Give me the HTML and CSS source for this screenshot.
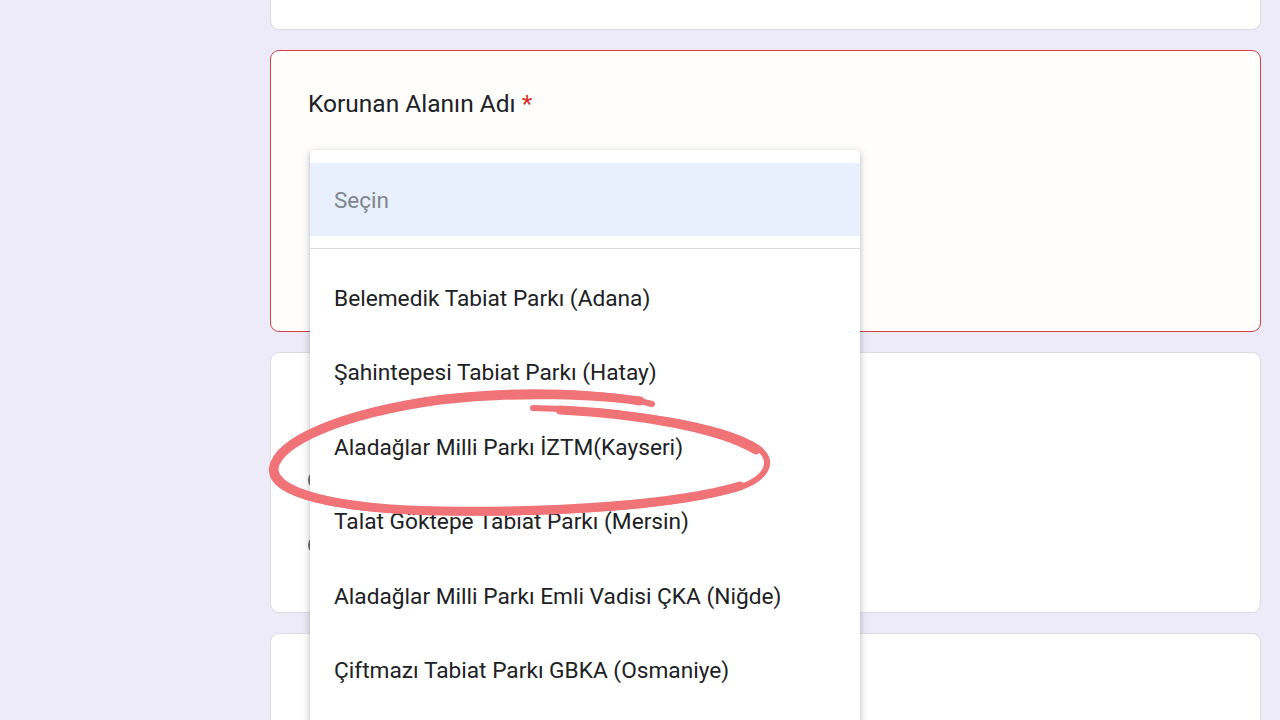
FILE: index.html
```html
<!DOCTYPE html>
<html lang="tr">
<head>
<meta charset="utf-8">
<title>Korunan Alanın Adı</title>
<link rel="stylesheet" href="styles.css">
</head>
<body>
<main class="column">
  <section class="card card-top"></section>
  <section class="card card-error">
    <div class="question-title">Korunan Alanın Adı <span class="req">*</span></div>
  </section>
  <section class="card card-radio">
    <div class="radio-row"><span class="radio"></span></div>
    <div class="radio-row"><span class="radio"></span></div>
  </section>
  <section class="card card-bottom"></section>
</main>

<div class="menu">
  <div class="menu-head"><div class="menu-placeholder">Seçin</div></div>
  <div class="menu-divider"></div>
  <ul class="menu-list">
    <li>Belemedik Tabiat Parkı (Adana)</li>
    <li>Şahintepesi Tabiat Parkı (Hatay)</li>
    <li>Aladağlar Milli Parkı İZTM(Kayseri)</li>
    <li>Talat Göktepe Tabiat Parkı (Mersin)</li>
    <li>Aladağlar Milli Parkı Emli Vadisi ÇKA (Niğde)</li>
    <li>Çiftmazı Tabiat Parkı GBKA (Osmaniye)</li>
  </ul>
</div>

<svg class="scribble" width="1280" height="720" viewBox="0 0 1280 720">
  <path class="thin" d="M 533 408 C 620 410, 722 424, 758 448 C 776 462, 766 479, 738 488 C 680 506, 560 515, 440 512 C 340 510, 268 496, 272 468 C 276 440, 340 412, 440 398 C 520 388, 610 392, 652 404" />
  <path class="thick" d="M 560 410 C 640 414, 720 428, 756 450 M 740 486 C 680 504, 560 513, 440 511 C 340 509, 272 494, 274 468 C 278 442, 340 414, 440 400 C 520 391, 600 395, 640 401" />
</svg>
</body>
</html>
```

FILE: styles.css
```css
html, body {
  margin: 0;
  padding: 0;
}
body {
  background: #ecebf7;
  font-family: Roboto, "Noto Sans", "Liberation Sans", sans-serif;
  width: 1280px;
  height: 720px;
  overflow: hidden;
  position: relative;
}
.column {
  margin-left: 270px;
  width: 991px;
  display: flex;
  flex-direction: column;
  gap: 20px;
}
.card {
  background: #ffffff;
  border: 1px solid #dadce0;
  border-radius: 9px;
  box-sizing: border-box;
}
.card-top {
  height: 30px;
  border-top: none;
  border-radius: 0 0 9px 9px;
}
.card-error {
  height: 282px;
  border-color: #d0414a;
  background: #fffefd;
  padding: 38px 0 0 37px;
}
.question-title {
  font-size: 24.5px;
  color: #202124;
}
.req {
  color: #d93025;
}
.card-radio {
  height: 261px;
  padding: 117px 0 0 37px;
  display: flex;
  flex-direction: column;
  gap: 45px;
}
.radio-row {
  height: 20px;
}
.radio {
  display: block;
  width: 16px;
  height: 16px;
  border: 2px solid #5f6368;
  border-radius: 50%;
}
.card-bottom {
  height: 120px;
}
.menu {
  position: absolute;
  left: 310px;
  top: 150px;
  width: 550px;
  height: 600px;
  background: #ffffff;
  border-radius: 4px;
  box-shadow: 0 2px 4px rgba(60, 64, 67, 0.25), 0 3px 10px 2px rgba(60, 64, 67, 0.12);
  padding-top: 13px;
  box-sizing: border-box;
  z-index: 2;
}
.menu-head {
  height: 73px;
  background: #e8f0fe;
  display: flex;
  align-items: center;
  padding-left: 24px;
}
.menu-placeholder {
  font-size: 22.5px;
  color: #80868b;
}
.menu-divider {
  margin-top: 12px;
  height: 1px;
  background: #dadce0;
}
.menu-list {
  list-style: none;
  margin: 0;
  padding: 12px 0 0 0;
}
.menu-list li {
  height: 74.5px;
  display: flex;
  align-items: center;
  padding-left: 24px;
  font-size: 22.7px;
  color: #202124;
}
.scribble {
  position: absolute;
  left: 0;
  top: 0;
  z-index: 3;
  pointer-events: none;
}
.scribble path {
  fill: none;
  stroke: #f07377;
  stroke-linecap: round;
  stroke-linejoin: round;
}
.scribble .thin {
  stroke-width: 6;
}
.scribble .thick {
  stroke-width: 9;
}
```
